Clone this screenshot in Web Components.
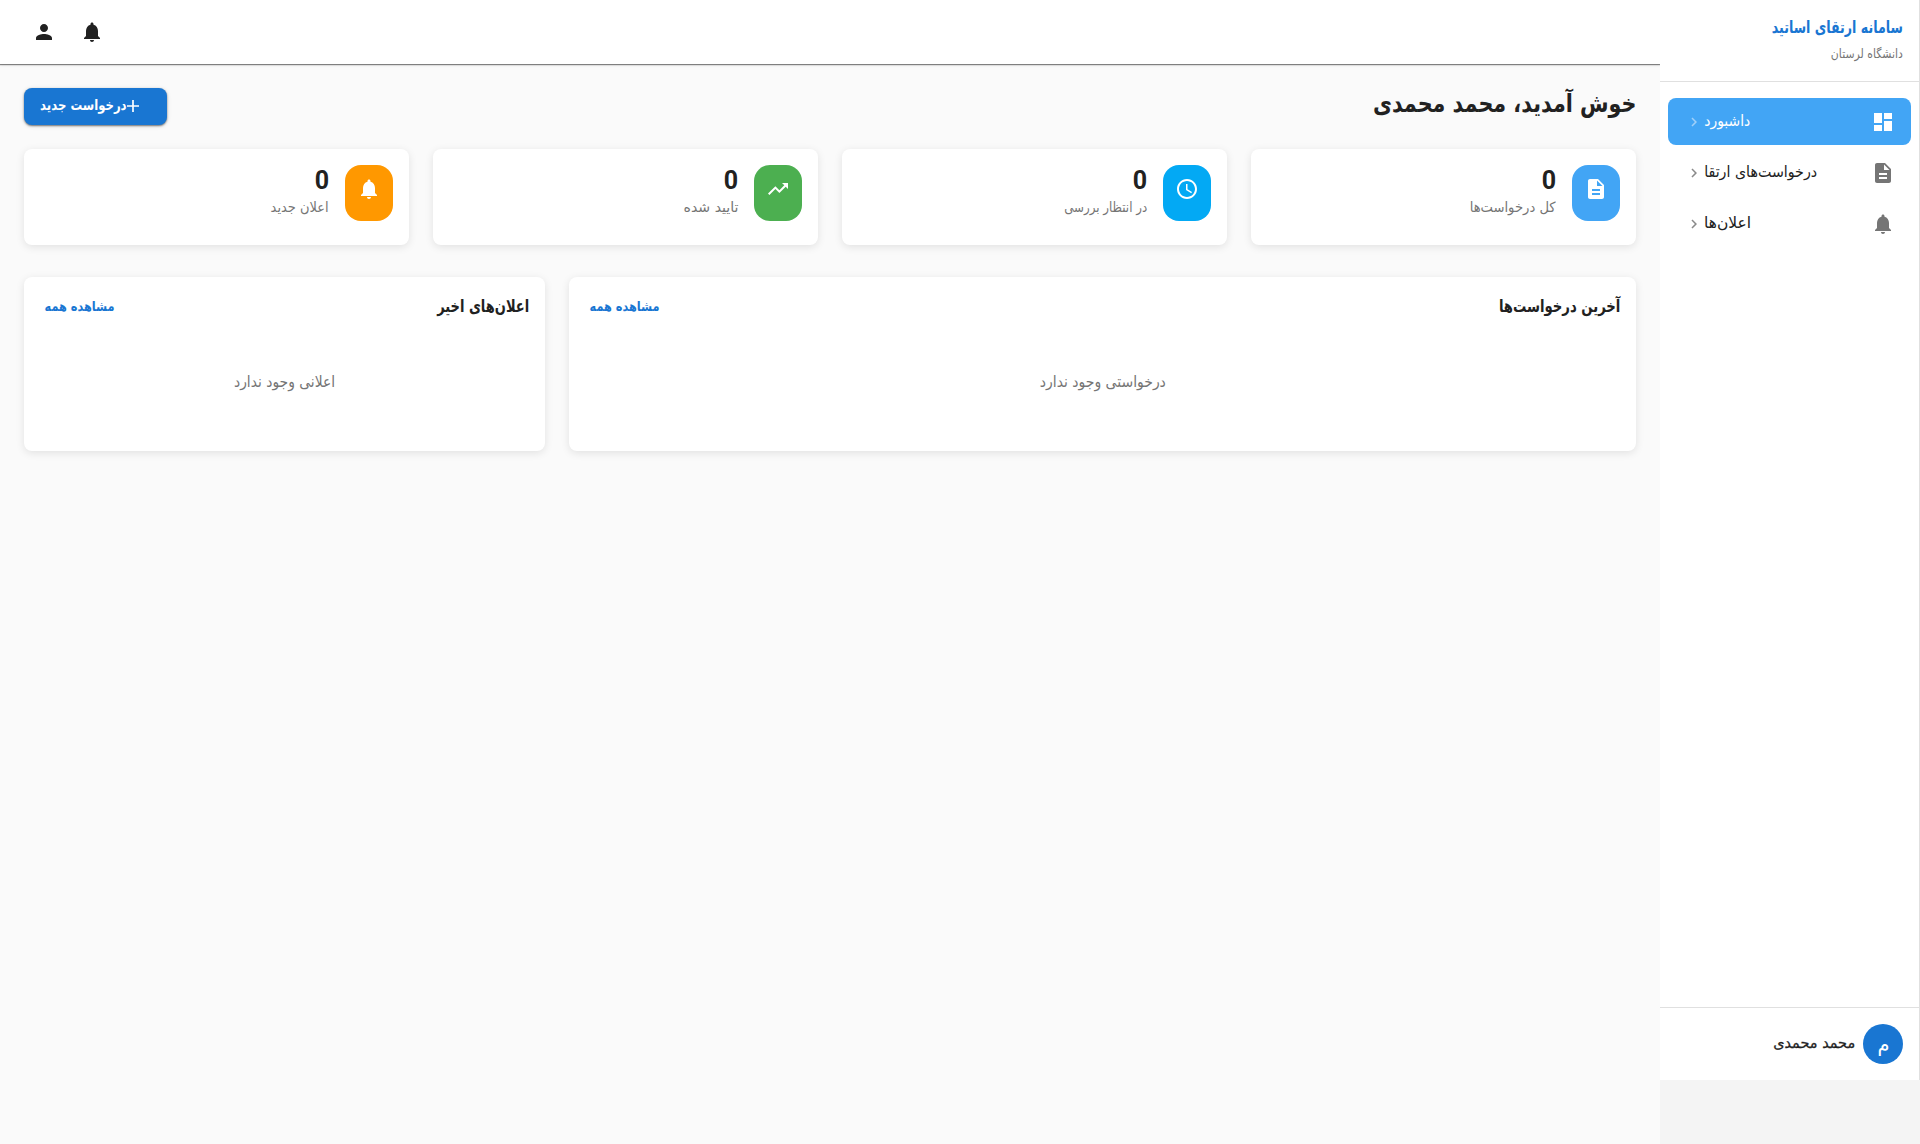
<!DOCTYPE html>
<html lang="fa" dir="rtl">
<head>
<meta charset="utf-8">
<title>سامانه ارتقای اساتید</title>
<style>
html,body{margin:0;height:100%}
body{background:#f4f4f4;font-family:"DejaVu Sans",sans-serif;color:#212121;overflow:hidden}
</style>
</head>
<body>
<promotion-app></promotion-app>
<script>
const define = (name, html, setup) => customElements.define(name, class extends HTMLElement {
  connectedCallback() {
    if (this.shadowRoot) return;
    const t = document.createElement('template');
    t.innerHTML = html;
    this.attachShadow({mode: 'open'}).append(t.content.cloneNode(true));
    if (setup) setup.call(this, this.shadowRoot);
  }
});

const ICONS = {
  dashboard: 'M3 13h8V3H3v10zm0 8h8v-6H3v6zm10 0h8V11h-8v10zm0-18v6h8V3h-8z',
  doc: 'M14 2H6c-1.1 0-1.99.9-1.99 2L4 20c0 1.1.89 2 1.99 2H18c1.1 0 2-.9 2-2V8l-6-6zm2 16H8v-2h8v2zm0-4H8v-2h8v2zm-3-5V3.500L18.500 9H13z',
  bell: 'M12 22c1.100 0 2-.9 2-2h-4c0 1.100.89 2 2 2zm6-6v-5c0-3.070-1.640-5.640-4.500-6.320V4c0-.83-.67-1.500-1.500-1.500s-1.500.67-1.500 1.500v.68C7.630 5.360 6 7.920 6 11v5l-2 2v1h16v-1l-2-2z',
  person: 'M12 12c2.210 0 4-1.790 4-4s-1.790-4-4-4-4 1.790-4 4 1.790 4 4 4zm0 2c-2.670 0-8 1.340-8 4v2h16v-2c0-2.660-5.330-4-8-4z',
  clock: 'M11.990 2C6.470 2 2 6.480 2 12s4.470 10 9.990 10C17.520 22 22 17.520 22 12S17.520 2 11.990 2zM12 20c-4.420 0-8-3.580-8-8s3.580-8 8-8 8 3.580 8 8-3.580 8-8 8zm.5-13H11v6l5.250 3.150.75-1.230-4.500-2.670z',
  trend: 'M16 6l2.290 2.290-4.880 4.880-4-4L2 16.590 3.410 18l6-6 4 4 6.300-6.290L22 12V6z',
  chevron: 'M10 6L8.590 7.410 13.170 12l-4.580 4.590L10 18l6-6z'
};

define('ui-icon', `<style>
:host{display:block;flex:none;width:var(--s,24px);height:var(--s,24px)}
svg{display:block;width:100%;height:100%;fill:currentColor}
</style><svg viewBox="0 0 24 24"><path/></svg>`, function (r) {
  r.querySelector('path').setAttribute('d', ICONS[this.getAttribute('name')]);
});

/* One-line label: keeps its type size and condenses to the width given in "w". */
define('fit-text', `<style>
:host{display:block;flex:none;white-space:nowrap}
span{display:inline-block;transform-origin:100% 50%}
</style><span><slot></slot></span>`, function (r) {
  const w = +this.getAttribute('w'), s = r.querySelector('span');
  this.style.fontSize = this.getAttribute('size') + 'px';
  this.style.lineHeight = this.getAttribute('lh') + 'px';
  this.style.height = this.getAttribute('lh') + 'px';
  const n = s.getBoundingClientRect().width;
  this.style.width = w + 'px';
  s.style.transform = 'scaleX(' + (w / n) + ')';
});

define('side-bar', `<style>
:host{display:flex;flex-direction:column;position:relative;z-index:1;width:260px;height:1080px;box-sizing:border-box;background:#fff;border-right:1px solid #e0e0e0}
header{border-bottom:1px solid #e0e0e0;padding:15px 16px 0;height:66px}
.t{color:#1976d2;font-weight:bold}
.s{color:#757575;margin-top:3px}
nav{display:flex;flex-direction:column;gap:4px;padding:16px 8px}
footer{margin-top:auto;border-top:1px solid #e0e0e0;display:flex;align-items:center;height:72px;padding:0 16px;gap:8px}
.a{width:40px;height:40px;border-radius:50%;background:#1976d2;color:#fff;display:flex;justify-content:center;align-items:center}
footer>fit-text{margin-top:-3px;-webkit-text-stroke:.3px}
.row{display:flex;align-items:center;height:47px;border-radius:8px;padding:0 16px;color:#757575}
.row fit-text{color:#212121;margin-right:auto;margin-top:-2px}
.row .c{--s:18px;margin-right:1px;margin-left:1px;color:#8a8a8a}
.row ui-icon{margin-top:1px}
.row.on{background:#42a5f5;color:#fff}
.row.on fit-text{color:#fff}
.row.on .c{color:#a0d0f9}
</style>
<header><fit-text class="t" size="17" lh="24" w="131">سامانه ارتقای اساتید</fit-text>
<fit-text class="s" size="12.500" lh="24" w="72">دانشگاه لرستان</fit-text></header>
<nav>
<div class="row on"><ui-icon name="dashboard"></ui-icon><fit-text size="15.500" lh="24" w="46">داشبورد</fit-text><ui-icon class="c" name="chevron"></ui-icon></div>
<div class="row"><ui-icon name="doc"></ui-icon><fit-text size="15.500" lh="24" w="113">درخواست‌های ارتقا</fit-text><ui-icon class="c" name="chevron"></ui-icon></div>
<div class="row"><ui-icon name="bell"></ui-icon><fit-text size="15.500" lh="24" w="47">اعلان‌ها</fit-text><ui-icon class="c" name="chevron"></ui-icon></div>
</nav>
<footer><div class="a"><fit-text size="20" lh="24" w="12">م</fit-text></div><fit-text size="14.500" lh="24" w="82">محمد محمدی</fit-text></footer>`);

define('top-bar', `<style>
:host{display:flex;direction:ltr;align-items:center;gap:24px;height:64px;box-sizing:border-box;padding:0 32px;background:#fff;box-shadow:0 1px 1px rgba(0,0,0,.45),0 1px 3px rgba(0,0,0,.12);color:#212121}
</style><ui-icon name="person"></ui-icon><ui-icon name="bell"></ui-icon>`);

define('new-button', `<style>
:host{display:flex;align-items:flex-start;box-sizing:border-box;width:143px;height:37px;border-radius:8px;background:#1976d2;color:#fff;padding:9px 28px 0 0;box-shadow:0 1px 2px rgba(0,0,0,.5),0 1px 5px rgba(0,0,0,.12);font-weight:bold}
fit-text{margin-top:-4px}
svg{display:block;width:12px;height:12px;margin-top:3px;flex:none}
</style><svg viewBox="0 0 12 12"><path d="M6 0v12M0 6h12" stroke="#fff" stroke-width="1.700"/></svg><fit-text size="14.500" lh="24" w="86.500">درخواست جدید</fit-text>`);

define('stat-card', `<style>
:host{display:flex;gap:16px;flex:1;height:96px;box-sizing:border-box;padding:16px;border-radius:8px;background:#fff;box-shadow:0 2px 8px rgba(0,0,0,.1)}
.i{width:48px;height:56px;box-sizing:border-box;padding:12px;border-radius:16px;background:var(--c);color:#fff}
.n{font:bold 25px/32px Roboto,sans-serif;height:29px}
</style><div class="i"><ui-icon></ui-icon></div><div><div class="n">0</div><slot></slot></div>`, function (r) {
  const i = document.createElement('ui-icon');
  i.setAttribute('name', this.getAttribute('icon'));
  r.querySelector('ui-icon').replaceWith(i);
});

define('info-panel', `<style>
:host{display:flex;flex-direction:column;box-sizing:border-box;height:174px;padding:16px 16px 0;border-radius:8px;background:#fff;box-shadow:0 2px 8px rgba(0,0,0,.1)}
.h{display:flex;justify-content:space-between;align-items:flex-start;height:61px;padding-left:5px}
::slotted([slot=title]){font-weight:bold;margin-top:1px}
::slotted([slot=link]){color:#1976d2;font-weight:bold;margin-top:1px}
.b{display:flex;justify-content:center;color:#757575;padding:16px 0 0 1px}
</style><div class="h"><slot name="title"></slot><slot name="link"></slot></div><div class="b"><slot></slot></div>`);

define('promotion-app', `<style>
:host{display:flex;height:1144px}
main{flex:1;display:flex;flex-direction:column;background:#fafafa}
.p{padding:24px}
.head{display:flex;justify-content:space-between;height:61px}
.head>fit-text{font-weight:bold}
.stats{display:flex;gap:24px;margin-bottom:32px}
.stats fit-text{color:#757575;margin-top:1px}
.panels{display:flex;gap:24px}
</style>
<side-bar></side-bar>
<main><top-bar></top-bar><div class="p">
<div class="head"><fit-text size="25" lh="32" w="263.500">خوش آمدید، محمد محمدی</fit-text><new-button></new-button></div>
<div class="stats">
<stat-card icon="doc" style="--c:#42a5f5"><fit-text size="14" lh="24" w="86">کل درخواست‌ها</fit-text></stat-card>
<stat-card icon="clock" style="--c:#03a9f4"><fit-text size="14" lh="24" w="83">در انتظار بررسی</fit-text></stat-card>
<stat-card icon="trend" style="--c:#4caf50"><fit-text size="14" lh="24" w="55">تایید شده</fit-text></stat-card>
<stat-card icon="bell" style="--c:#ff9800"><fit-text size="14" lh="24" w="58">اعلان جدید</fit-text></stat-card>
</div>
<div class="panels">
<info-panel style="width:1067px"><fit-text slot="title" size="17" lh="24" w="121.500">آخرین درخواست‌ها</fit-text><fit-text slot="link" size="13.500" lh="24" w="70">مشاهده همه</fit-text><fit-text size="15.500" lh="24" w="126">درخواستی وجود ندارد</fit-text></info-panel>
<info-panel style="width:521px"><fit-text slot="title" size="17" lh="24" w="92">اعلان‌های اخیر</fit-text><fit-text slot="link" size="13.500" lh="24" w="70">مشاهده همه</fit-text><fit-text size="15.500" lh="24" w="101">اعلانی وجود ندارد</fit-text></info-panel>
</div></div></main>`);
</script>
</body>
</html>
